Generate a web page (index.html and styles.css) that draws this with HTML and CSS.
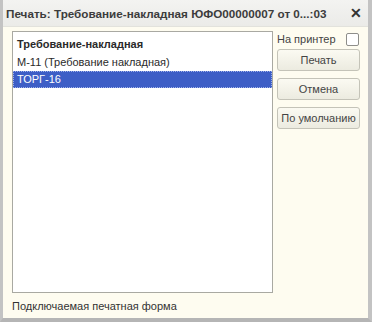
FILE: index.html
```html
<!DOCTYPE html>
<html lang="ru">
<head>
  <meta charset="UTF-8" />
  <title>Печать</title>
  <link rel="stylesheet" href="styles.css">
</head>
<body>

  <div class="window">
    <!-- Title bar -->
    <div class="titlebar">
      <span class="title">Печать: Требование-накладная ЮФО00000007 от 0...:03</span>
      <span class="close">&#x2715;</span>
    </div>

    <div class="content">
      <div class="main">
        <div class="list">
          <div class="row group">Требование-накладная</div>
          <div class="row">М-11 (Требование накладная)</div>
          <div class="row selected">ТОРГ-16</div>
        </div>
        <div class="side">
          <label class="printer">
            <span>На принтер</span>
            <span class="checkbox"></span>
          </label>
          <button class="btn">Печать</button>
          <button class="btn">Отмена</button>
          <button class="btn">По умолчанию</button>
        </div>
      </div>
      <div class="footer">Подключаемая печатная форма</div>
    </div>
  </div>

</body>
</html>
```

FILE: styles.css
```css
body {
  margin: 0;
  font-family: "Liberation Sans", Arial, sans-serif;
  font-size: 11px;
  color: #2b2b2b;
  background: #ffffff;
}

.window {
  width: 372px;
  height: 322px;
  box-sizing: border-box;
  display: flex;
  flex-direction: column;
  background: #fefcf0;
  border-left: 3px solid #c3c3c3;
  border-right: 4px solid #c3c3c3;
  border-bottom: 4px solid #b5b5b5;
}

.titlebar {
  height: 26px;
  display: flex;
  align-items: center;
  justify-content: space-between;
  padding: 0 6px 0 3px;
  background: linear-gradient(#f3f3f1, #ebebe8);
  border-bottom: 1px solid #e2e2dc;
  white-space: nowrap;
}

.title {
  font-size: 11.7px;
  font-weight: bold;
  color: #3c3c3c;
}

.close {
  font-size: 14px;
  font-weight: bold;
  color: #333;
}

.content {
  flex: 1;
  display: flex;
  flex-direction: column;
  padding: 4px 8px 0 9px;
}

.main {
  flex: 1;
  display: flex;
  gap: 4px;
}

.list {
  width: 261px;
  height: 262px;
  background: #ffffff;
  border: 1px solid #a9a9a2;
  padding-top: 3px;
  box-sizing: border-box;
}

.row {
  height: 17px;
  line-height: 17px;
  padding-left: 4px;
  color: #2a2a2a;
}

.row.group {
  font-weight: bold;
  height: 19px;
  line-height: 19px;
}

.row.selected {
  background: #3d5ec6;
  color: #ffffff;
  outline: 1px dotted #9fb2ea;
  outline-offset: -1px;
}

.side {
  display: flex;
  flex-direction: column;
  width: 83px;
}

.printer {
  display: flex;
  align-items: center;
  justify-content: space-between;
  height: 14px;
  margin-top: 1px;
  margin-bottom: 3px;
  color: #444;
}

.checkbox {
  width: 11px;
  height: 11px;
  border: 1px solid #8e8e8a;
  border-radius: 2px;
  background: #ffffff;
  margin-right: 1px;
}

.btn {
  height: 22px;
  margin-bottom: 7px;
  font-family: inherit;
  font-size: 11px;
  color: #444;
  background: linear-gradient(#fbfaf2, #ecebe0);
  border: 1px solid #c4c3b8;
  border-radius: 3px;
  padding: 0;
}

.footer {
  height: 20px;
  line-height: 17px;
  color: #333;
}
```
